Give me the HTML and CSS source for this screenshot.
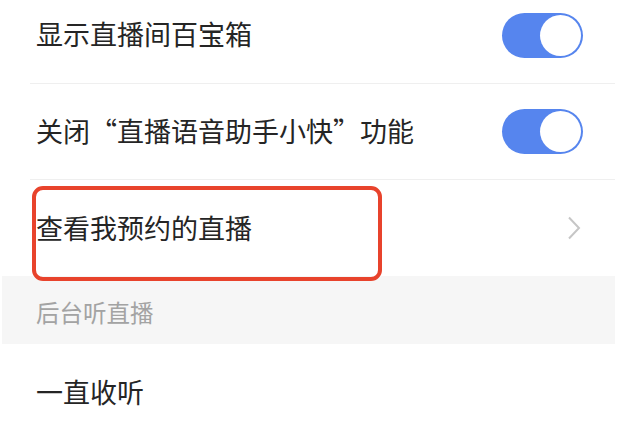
FILE: index.html
```html
<!DOCTYPE html>
<html lang="zh-CN">
<head>
<meta charset="utf-8">
<title>直播设置</title>
<link rel="stylesheet" href="styles.css">
</head>
<body>
<div class="page">
  <div class="list">
    <div class="row row--first">
      <span class="label">显示直播间百宝箱</span>
      <span class="switch"><span class="knob"></span></span>
    </div>
    <div class="row">
      <span class="label">关闭“直播语音助手小快”功能</span>
      <span class="switch"><span class="knob"></span></span>
    </div>
    <div class="row row--last">
      <span class="label">查看我预约的直播</span>
      <svg class="chevron" width="14" height="24" viewBox="0 0 14 24"><path d="M2 1.5 L12 12 L2 22.5" fill="none" stroke="#c6c6c6" stroke-width="2"/></svg>
    </div>
    <div class="section">后台听直播</div>
    <div class="row row--plain">
      <span class="label">一直收听</span>
    </div>
  </div>
  <div class="highlight"></div>
</div>
</body>
</html>
```

FILE: styles.css
```css
html, body {
  margin: 0;
  padding: 0;
  background: #ffffff;
}

.page {
  position: relative;
  width: 644px;
  height: 422px;
  overflow: hidden;
  font-family: "Noto Sans CJK SC", "Noto Sans", sans-serif;
}

.list {
  width: 613px;
  margin-left: 2px;
  margin-top: -12px;
}

.row {
  display: flex;
  align-items: center;
  justify-content: space-between;
  height: 96px;
  margin-left: 28px;
  padding-left: 6px;
  padding-right: 32px;
  border-bottom: 1px solid #efefef;
  box-sizing: border-box;
}

.row--first .label {
  top: -2px;
}

.row--last {
  border-bottom: none;
  padding-right: 34px;
}

.row--plain {
  border-bottom: none;
}

.label {
  font-size: 27px;
  color: #252525;
  line-height: 1;
  position: relative;
  top: -1px;
}

.switch {
  display: flex;
  align-items: center;
  justify-content: flex-end;
  width: 81px;
  height: 45px;
  border-radius: 23px;
  background: #5685ee;
  padding: 2px;
  box-sizing: border-box;
}

.knob {
  width: 41px;
  height: 41px;
  border-radius: 50%;
  background: #ffffff;
}

.section {
  display: flex;
  align-items: center;
  height: 68px;
  padding-left: 34px;
  padding-top: 4px;
  box-sizing: border-box;
  background: #f6f6f6;
  font-size: 23.5px;
  color: #a3a3a3;
}

.highlight {
  position: absolute;
  left: 32px;
  top: 186px;
  width: 350px;
  height: 95px;
  border: 4.5px solid #e8432c;
  border-radius: 11px;
  box-sizing: border-box;
}
```
